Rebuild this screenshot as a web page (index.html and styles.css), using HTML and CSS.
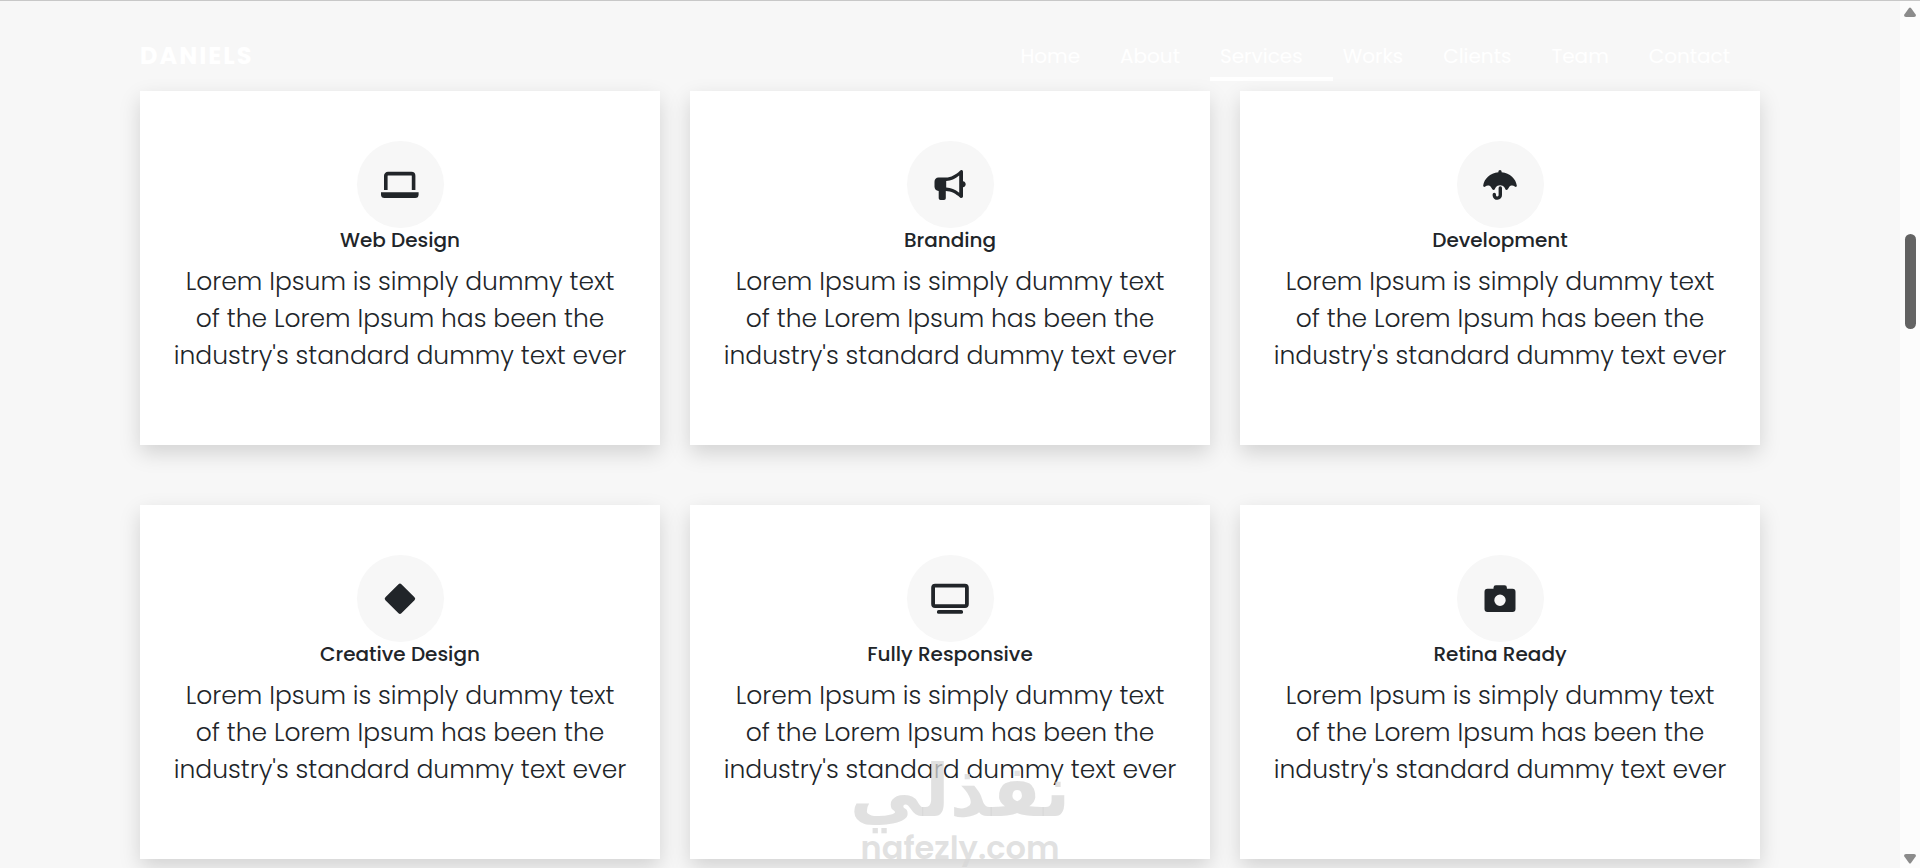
FILE: index.html
```
<!DOCTYPE html>
<html lang="en">
<head>
    <meta charset="UTF-8">
    <meta name="viewport" content="width=device-width, initial-scale=1.0">
    <title>Daniels</title>
    <link rel="stylesheet" href="styles.css">
</head>
<body>
    <div class="page">
        <header class="header container">
            <a class="logo" href="#">DANIELS</a>
            <nav class="nav">
                <a href="#home">Home</a>
                <a href="#about">About</a>
                <a class="active" href="#services">Services</a>
                <a href="#works">Works</a>
                <a href="#clients">Clients</a>
                <a href="#team">Team</a>
                <a href="#contact">Contact</a>
            </nav>
        </header>

        <main class="services container" id="services">
            <article class="card">
                <div class="icon">
                    <svg viewBox="0 0 38 38"><path d="M4.800 24V9.800a2.200 2.200 0 0 1 2.200-2.200h23.400a2.200 2.200 0 0 1 2.200 2.200V24" fill="none" stroke="currentColor" stroke-width="3.600"/><path d="M0 26.200h37.600v2.300a3.500 3.500 0 0 1-3.500 3.500H3.500A3.500 3.500 0 0 1 0 28.500z"/></svg>
                </div>
                <h5>Web Design</h5>
                <p>Lorem Ipsum is simply dummy text of the Lorem Ipsum has been the industry's standard dummy text ever</p>
            </article>
            <article class="card">
                <div class="icon">
                    <svg viewBox="0 0 38 38"><path fill-rule="evenodd" d="M7.500 11.500h7.300C20 11.500 25 8.500 29 4.700c1.200-1.100 3-.6 3 1v9.600c1.600.3 2.700 1.400 2.700 3s-1.100 2.700-2.700 3v9c0 1.600-1.800 2.200-3 1.100C25 27.800 20 25 14.800 25v7.300a1.800 1.800 0 0 1-1.800 1.800H9.500a1.800 1.800 0 0 1-1.800-1.800V25c-2.500 0-4.200-2-4.200-4.200v-5c0-2.400 1.700-4.300 4-4.300zm7.700 3.400v6.700c4.700.2 9 2 13 5.100V9.400c-4 3.300-8.300 5.200-13 5.500z"/></svg>
                </div>
                <h5>Branding</h5>
                <p>Lorem Ipsum is simply dummy text of the Lorem Ipsum has been the industry's standard dummy text ever</p>
            </article>
            <article class="card">
                <div class="icon">
                    <svg viewBox="0 0 38 38"><path d="M17.400 6.200V5.500a1.600 1.600 0 0 1 3.200 0v.7C29 6.900 35 13 35.800 19.500c.2 1.300-1 1.900-2 1.100-1.700-1.400-4.200-1.300-5.600.3-.8 1-1.600 3-2.700 3s-1.300-1.500-2-2.500c-2-3-6.800-3-8.800 0-.7 1-1 2.500-2.100 2.500s-1.800-2-2.700-3c-1.400-1.600-3.900-1.700-5.600-.3-1 .8-2.200.2-2.100-1.100C3 13 9 6.900 17.400 6.200z"/><path d="M19.300 22v7a3 3 0 0 1-6 .3v-.8" fill="none" stroke="currentColor" stroke-width="3.400" stroke-linecap="round"/></svg>
                </div>
                <h5>Development</h5>
                <p>Lorem Ipsum is simply dummy text of the Lorem Ipsum has been the industry's standard dummy text ever</p>
            </article>
            <article class="card">
                <div class="icon">
                    <svg viewBox="0 0 38 38"><path d="M17.500 4.200a2 2 0 0 1 2.900 0l13.100 13.100a2 2 0 0 1 0 2.900L20.400 33.300a2 2 0 0 1-2.900 0L4.400 20.200a2 2 0 0 1 0-2.900z"/></svg>
                </div>
                <h5>Creative Design</h5>
                <p>Lorem Ipsum is simply dummy text of the Lorem Ipsum has been the industry's standard dummy text ever</p>
            </article>
            <article class="card">
                <div class="icon">
                    <svg viewBox="0 0 38 38"><rect x="2.100" y="5.700" width="33.800" height="20.400" rx="2" fill="none" stroke="currentColor" stroke-width="3.800"/><rect x="6" y="30" width="26" height="3.800" rx="1.600"/></svg>
                </div>
                <h5>Fully Responsive</h5>
                <p>Lorem Ipsum is simply dummy text of the Lorem Ipsum has been the industry's standard dummy text ever</p>
            </article>
            <article class="card">
                <div class="icon">
                    <svg viewBox="0 0 38 38"><path fill-rule="evenodd" d="M12.500 8.800V7.700a2.400 2.400 0 0 1 2.400-2.400h8.600a2.400 2.400 0 0 1 2.400 2.400v1.100h5.600a3 3 0 0 1 3 3V29a3 3 0 0 1-3 3h-25a3 3 0 0 1-3-3V11.800a3 3 0 0 1 3-3zM19 14.600a5.700 5.700 0 1 0 0 11.400 5.700 5.700 0 0 0 0-11.400z"/></svg>
                </div>
                <h5>Retina Ready</h5>
                <p>Lorem Ipsum is simply dummy text of the Lorem Ipsum has been the industry's standard dummy text ever</p>
            </article>
        </main>
    </div>

    <div class="scrollbar">
        <svg class="arrow" viewBox="0 0 12 10"><path d="M5 1q1-1 2 0l5 7q0 2-2 2H2q-2 0-2-2z"/></svg>
        <div class="track"><div class="thumb"></div></div>
        <svg class="arrow" viewBox="0 0 12 10"><path d="M5 9q1 1 2 0l5-7q0-2-2-2H2Q0 0 0 2z"/></svg>
    </div>

    <div class="watermark">
        <span class="watermark-ar" lang="ar" dir="rtl">نفذلي</span>
        <span class="watermark-url">nafezly.com</span>
    </div>
</body>
</html>
```
FILE: styles.css
```
* {
    box-sizing: border-box;
}
body {
    margin: 0;
    height: 100vh;
    display: flex;
    overflow: hidden;
    position: relative;
    font-family: Poppins, Inter, sans-serif;
    color: #212529;
    background-color: #f7f7f7;
    border-top: 1px solid #c8c8c8;
}
.page {
    flex: 1;
}
.container {
    width: 100%;
    max-width: 1680px;
    margin: 0 auto;
    padding: 0 30px;
}
.header {
    display: flex;
    justify-content: space-between;
    align-items: flex-end;
    height: 90px;
    padding-bottom: 10px;
}
.logo {
    color: #fff;
    font-size: 24px;
    font-weight: 700;
    line-height: 50px;
    letter-spacing: 2px;
    text-decoration: none;
}
.nav {
    display: flex;
}
.nav a {
    padding: 0 30px 0 10px;
    color: #fff;
    font-size: 20px;
    font-weight: 400;
    line-height: 42px;
    text-decoration: none;
    border-bottom: 4px solid transparent;
}
.nav a.active {
    border-bottom-color: #fff;
}
.services {
    display: grid;
    grid-template-columns: repeat(3, 1fr);
    gap: 60px 30px;
}
.card {
    padding: 50px 32px 71px;
    text-align: center;
    background-color: #fff;
    box-shadow: 0 8px 20px rgba(0, 0, 0, 0.15);
}
.icon {
    display: flex;
    align-items: center;
    justify-content: center;
    width: 87px;
    height: 87px;
    margin: 0 auto;
    border-radius: 50%;
    background-color: #f7f7f7;
}
.icon svg {
    width: 38px;
    height: 38px;
    fill: currentColor;
}
.card h5 {
    margin: 0 0 11px;
    font-size: 20px;
    font-weight: 500;
    line-height: 24px;
}
.card p {
    margin: 0;
    font-size: 25px;
    font-weight: 300;
    line-height: 37px;
}
.scrollbar {
    display: flex;
    flex-direction: column;
    align-items: center;
    width: 20px;
    padding: 6px 0 4px;
    background-color: #fcfcfc;
}
.arrow {
    width: 12px;
    height: 10px;
    fill: #8b8b8b;
}
.track {
    flex: 1;
    padding-top: 217px;
}
.thumb {
    width: 11px;
    height: 95px;
    border-radius: 6px;
    background-color: #636363;
}
.watermark {
    position: absolute;
    left: 50%;
    bottom: 0;
    transform: translateX(-50%);
    display: flex;
    flex-direction: column;
    align-items: center;
    color: rgba(215, 215, 215, 0.75);
    pointer-events: none;
}
.watermark-ar {
    font-family: "DejaVu Sans", sans-serif;
    font-size: 72px;
    font-weight: 700;
    line-height: 74px;
}
.watermark-url {
    font-size: 32px;
    font-weight: 600;
    line-height: 40px;
}
```
